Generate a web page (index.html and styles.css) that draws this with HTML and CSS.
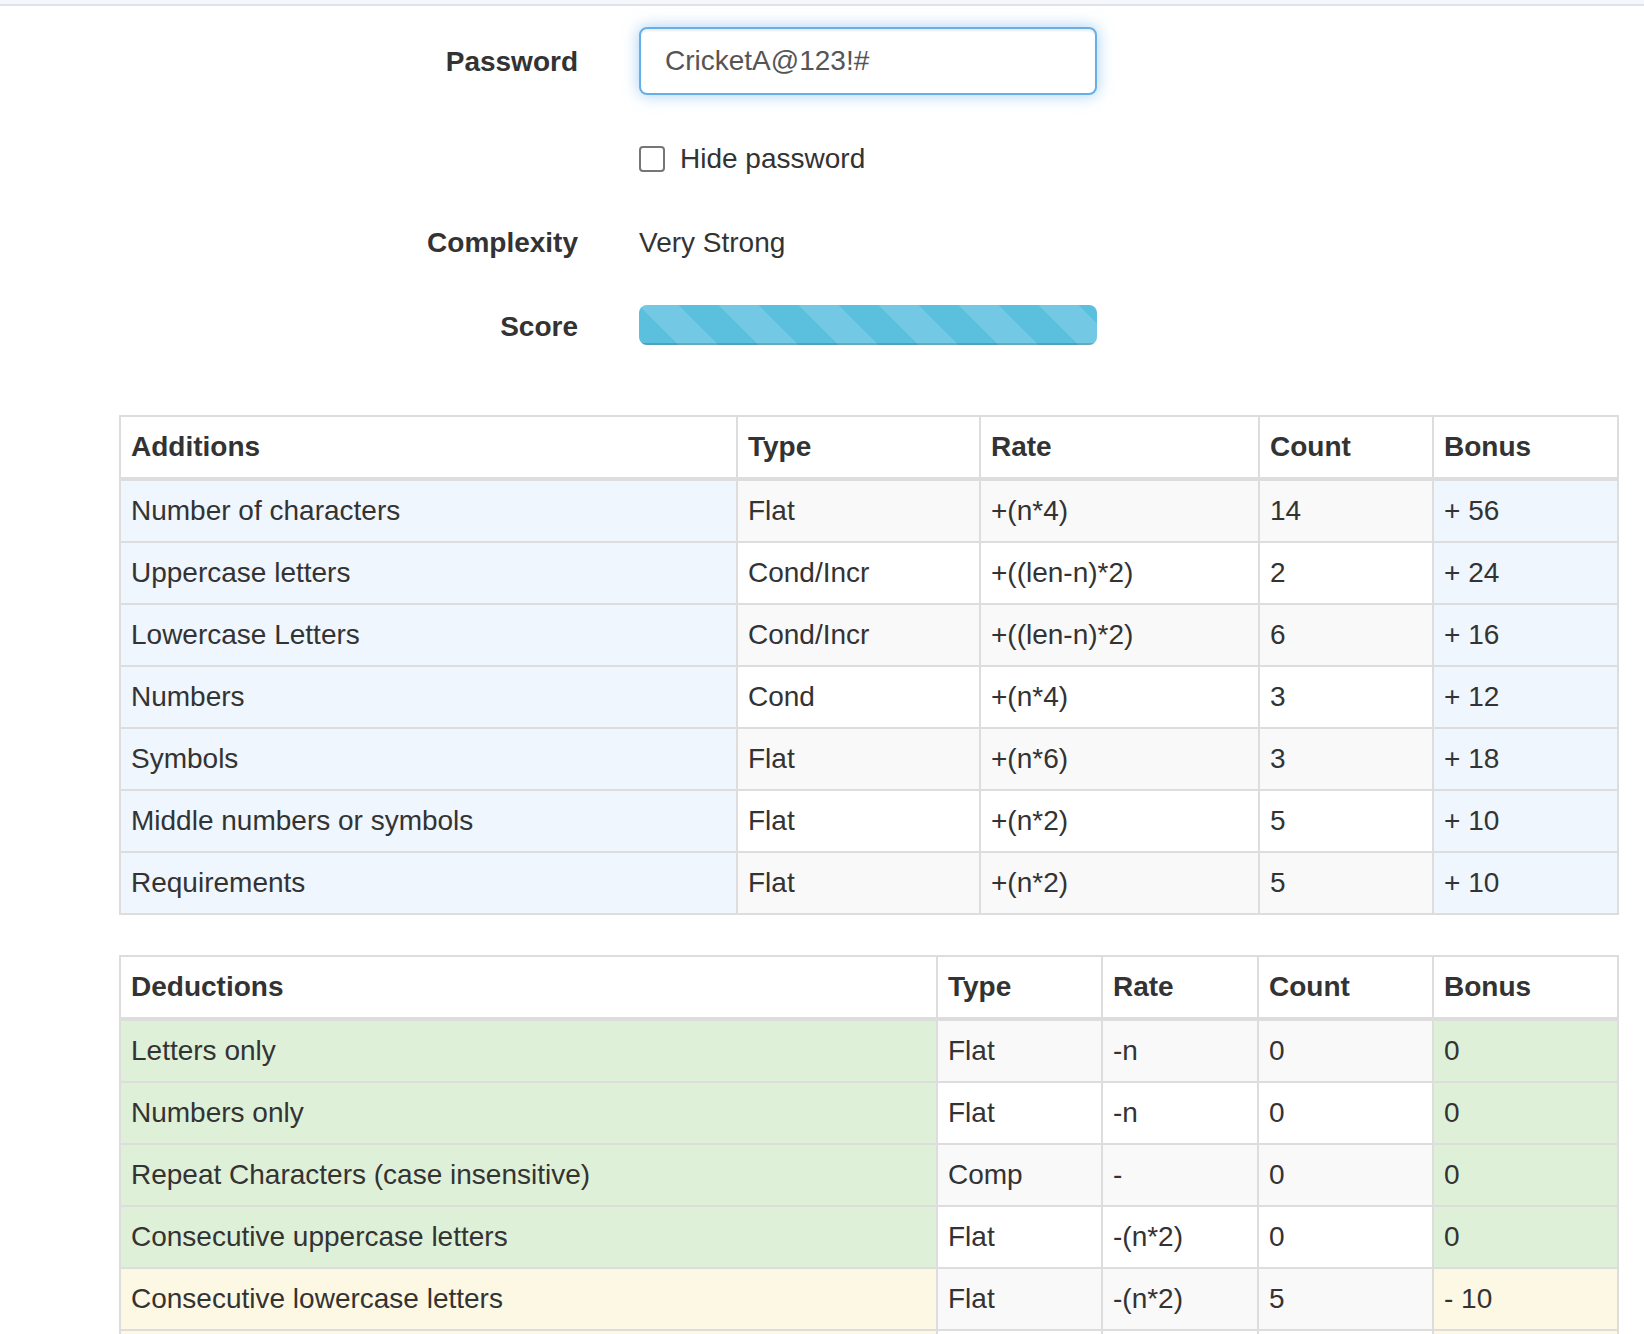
FILE: index.html
```html
<!DOCTYPE html>
<html lang="en">
<head>
<meta charset="utf-8">
<title>Password Strength</title>
<link rel="stylesheet" href="styles.css">
</head>
<body>
<div class="topbar"></div>
<form class="pw-form">
  <div class="form-row row-password">
    <label class="form-label" for="pw">Password</label>
    <div class="form-control-wrap">
      <input id="pw" class="text-input" type="text" value="CricketA@123!#">
    </div>
  </div>
  <div class="form-row row-check">
    <div class="form-label"></div>
    <div class="form-control-wrap">
      <label class="check-label"><span class="checkbox-box"></span>Hide password</label>
    </div>
  </div>
  <div class="form-row row-complexity">
    <div class="form-label">Complexity</div>
    <div class="form-control-wrap static-text">Very Strong</div>
  </div>
  <div class="form-row row-score">
    <div class="form-label score-label">Score</div>
    <div class="form-control-wrap">
      <div class="progress"><div class="progress-bar" style="width:100%"></div></div>
    </div>
  </div>
</form>

<table class="score-table additions">
  <colgroup>
    <col class="c1"><col class="c2"><col class="c3"><col class="c4"><col class="c5">
  </colgroup>
  <thead>
    <tr><th>Additions</th><th>Type</th><th>Rate</th><th>Count</th><th>Bonus</th></tr>
  </thead>
  <tbody>
    <tr><td class="info">Number of characters</td><td>Flat</td><td>+(n*4)</td><td>14</td><td class="info">+ 56</td></tr>
    <tr><td class="info">Uppercase letters</td><td>Cond/Incr</td><td>+((len-n)*2)</td><td>2</td><td class="info">+ 24</td></tr>
    <tr><td class="info">Lowercase Letters</td><td>Cond/Incr</td><td>+((len-n)*2)</td><td>6</td><td class="info">+ 16</td></tr>
    <tr><td class="info">Numbers</td><td>Cond</td><td>+(n*4)</td><td>3</td><td class="info">+ 12</td></tr>
    <tr><td class="info">Symbols</td><td>Flat</td><td>+(n*6)</td><td>3</td><td class="info">+ 18</td></tr>
    <tr><td class="info">Middle numbers or symbols</td><td>Flat</td><td>+(n*2)</td><td>5</td><td class="info">+ 10</td></tr>
    <tr><td class="info">Requirements</td><td>Flat</td><td>+(n*2)</td><td>5</td><td class="info">+ 10</td></tr>
  </tbody>
</table>

<table class="score-table deductions">
  <colgroup>
    <col class="c1"><col class="c2"><col class="c3"><col class="c4"><col class="c5">
  </colgroup>
  <thead>
    <tr><th>Deductions</th><th>Type</th><th>Rate</th><th>Count</th><th>Bonus</th></tr>
  </thead>
  <tbody>
    <tr><td class="success">Letters only</td><td>Flat</td><td>-n</td><td>0</td><td class="success">0</td></tr>
    <tr><td class="success">Numbers only</td><td>Flat</td><td>-n</td><td>0</td><td class="success">0</td></tr>
    <tr><td class="success">Repeat Characters (case insensitive)</td><td>Comp</td><td>-</td><td>0</td><td class="success">0</td></tr>
    <tr><td class="success">Consecutive uppercase letters</td><td>Flat</td><td>-(n*2)</td><td>0</td><td class="success">0</td></tr>
    <tr><td class="warning">Consecutive lowercase letters</td><td>Flat</td><td>-(n*2)</td><td>5</td><td class="warning">- 10</td></tr>
    <tr><td class="warning">Consecutive numbers</td><td>Flat</td><td>-(n*2)</td><td>2</td><td class="warning">- 4</td></tr>
  </tbody>
</table>
</body>
</html>
```

FILE: styles.css
```css
* { box-sizing: border-box; }

html, body {
  margin: 0;
  padding: 0;
  background: #fff;
}

body {
  font-family: "Liberation Sans", Arial, Helvetica, sans-serif;
  font-size: 28px;
  line-height: 40px;
  color: #333;
}

.topbar {
  height: 6px;
  background: #f6f7fb;
  border-bottom: 2px solid #dfe1eb;
}

.pw-form {
  display: flex;
  flex-direction: column;
  padding-top: 21px;
  margin: 0;
}

.form-row {
  display: flex;
  align-items: center;
  gap: 61px;
}

.row-password { height: 68px; }
.row-password .form-label { padding-top: 2px; }
.row-check { height: 40px; margin-top: 43px; }
.row-check .check-label { padding-top: 2px; }
.row-complexity { height: 40px; margin-top: 44px; }
.row-complexity > * { padding-top: 2px; }
.row-score { height: 40px; margin-top: 43px; }
.score-label { padding-top: 4px; }

.form-label {
  width: 578px;
  flex: none;
  text-align: right;
  font-weight: bold;
}

.form-control-wrap {
  width: 458px;
  flex: none;
}

.text-input {
  display: block;
  width: 458px;
  height: 68px;
  padding: 0 24px;
  font-family: "Liberation Sans", Arial, Helvetica, sans-serif;
  font-size: 28px;
  color: #555;
  background: #fff;
  border: 2px solid #66afe9;
  border-radius: 8px;
  outline: none;
  box-shadow: inset 0 2px 2px rgba(0, 0, 0, .075), 0 0 16px rgba(102, 175, 233, .6);
}

.check-label {
  display: flex;
  align-items: center;
  gap: 15px;
  font-weight: normal;
}

.checkbox-box {
  display: inline-block;
  width: 26px;
  height: 26px;
  border: 2px solid #767676;
  border-radius: 4px;
  background: #fff;
}

.static-text {
  font-weight: normal;
}

.progress {
  height: 40px;
  border-radius: 8px;
  background: #f5f5f5;
  overflow: hidden;
}

.progress-bar {
  height: 40px;
  background-color: #5bc0de;
  background-image: linear-gradient(45deg,
    rgba(255, 255, 255, .15) 25%, transparent 25%,
    transparent 50%, rgba(255, 255, 255, .15) 50%,
    rgba(255, 255, 255, .15) 75%, transparent 75%, transparent);
  background-size: 80px 80px;
  box-shadow: inset 0 -2px 0 rgba(0, 0, 0, .15);
}

.score-table {
  border-collapse: collapse;
  table-layout: fixed;
  width: 1500px;
  margin-left: 119px;
  border: 2px solid #ddd;
}

.additions { margin-top: 70px; }
.deductions { margin-top: 40px; }

.additions .c1 { width: 617px; }
.additions .c2 { width: 243px; }
.additions .c3 { width: 279px; }
.additions .c4 { width: 174px; }
.additions .c5 { width: 185px; }

.deductions .c1 { width: 817px; }
.deductions .c2 { width: 165px; }
.deductions .c3 { width: 156px; }
.deductions .c4 { width: 175px; }
.deductions .c5 { width: 185px; }

.score-table th,
.score-table td {
  padding: 10px;
  border: 2px solid #ddd;
  text-align: left;
  vertical-align: top;
  white-space: nowrap;
}

.score-table th {
  font-weight: bold;
  border-bottom-width: 4px;
}

.score-table tbody tr:nth-child(odd) td { background: #f9f9f9; }

.score-table tbody tr td.info { background: #eff6fd; }
.score-table tbody tr td.success { background: #dff0d8; }
.score-table tbody tr td.warning { background: #fcf8e3; }
```
